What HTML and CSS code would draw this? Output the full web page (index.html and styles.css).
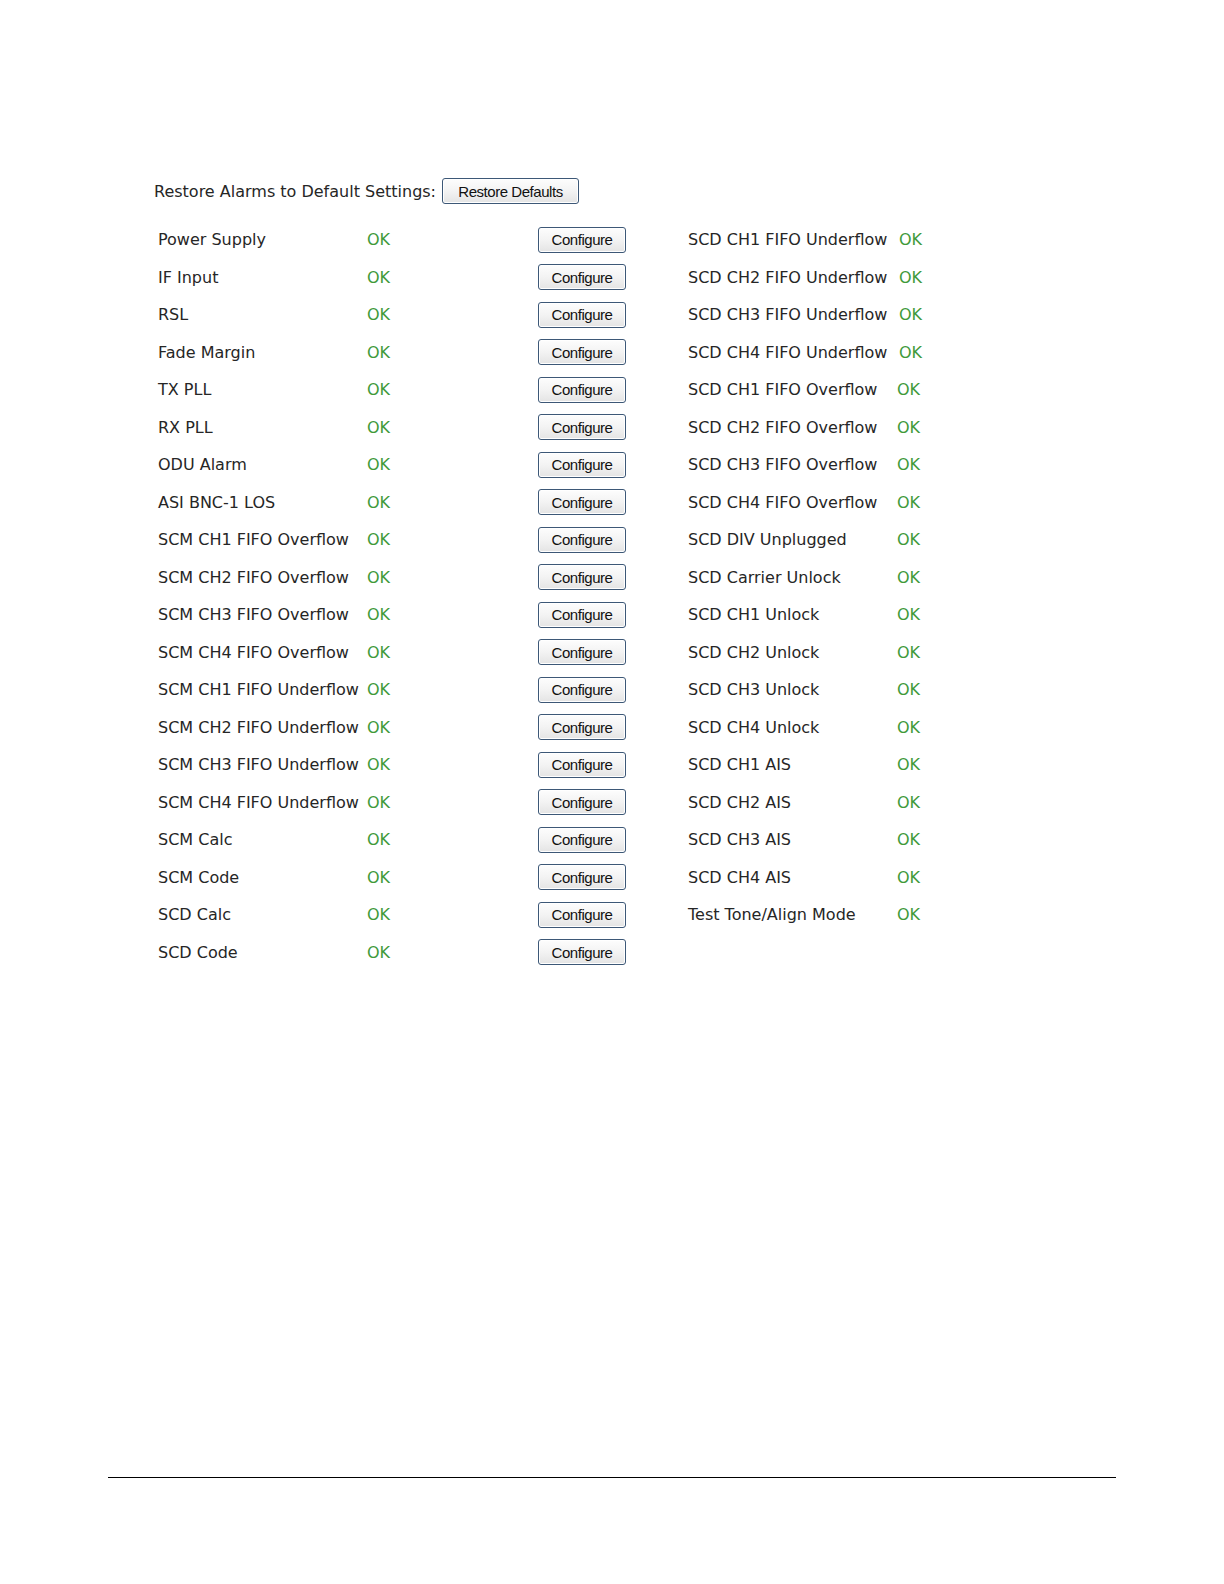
FILE: index.html
```html
<!DOCTYPE html>
<html>
<head>
<meta charset="utf-8">
<title>Alarms</title>
<link rel="stylesheet" href="styles.css">
</head>
<body>
<div class="page">
  <div class="restore-row">
    <span class="restore-label">Restore Alarms to Default Settings:</span>
    <button class="btn btn-restore">Restore Defaults</button>
  </div>
  <div class="alarms">
    <span class="lbl">Power Supply</span><span class="ok">OK</span><span class="cell-btn"><button class="btn">Configure</button></span><span class="lbl">SCD CH1 FIFO Underflow</span><span class="ok ok-wide">OK</span>
    <span class="lbl">IF Input</span><span class="ok">OK</span><span class="cell-btn"><button class="btn">Configure</button></span><span class="lbl">SCD CH2 FIFO Underflow</span><span class="ok ok-wide">OK</span>
    <span class="lbl">RSL</span><span class="ok">OK</span><span class="cell-btn"><button class="btn">Configure</button></span><span class="lbl">SCD CH3 FIFO Underflow</span><span class="ok ok-wide">OK</span>
    <span class="lbl">Fade Margin</span><span class="ok">OK</span><span class="cell-btn"><button class="btn">Configure</button></span><span class="lbl">SCD CH4 FIFO Underflow</span><span class="ok ok-wide">OK</span>
    <span class="lbl">TX PLL</span><span class="ok">OK</span><span class="cell-btn"><button class="btn">Configure</button></span><span class="lbl">SCD CH1 FIFO Overflow</span><span class="ok">OK</span>
    <span class="lbl">RX PLL</span><span class="ok">OK</span><span class="cell-btn"><button class="btn">Configure</button></span><span class="lbl">SCD CH2 FIFO Overflow</span><span class="ok">OK</span>
    <span class="lbl">ODU Alarm</span><span class="ok">OK</span><span class="cell-btn"><button class="btn">Configure</button></span><span class="lbl">SCD CH3 FIFO Overflow</span><span class="ok">OK</span>
    <span class="lbl">ASI BNC-1 LOS</span><span class="ok">OK</span><span class="cell-btn"><button class="btn">Configure</button></span><span class="lbl">SCD CH4 FIFO Overflow</span><span class="ok">OK</span>
    <span class="lbl">SCM CH1 FIFO Overflow</span><span class="ok">OK</span><span class="cell-btn"><button class="btn">Configure</button></span><span class="lbl">SCD DIV Unplugged</span><span class="ok">OK</span>
    <span class="lbl">SCM CH2 FIFO Overflow</span><span class="ok">OK</span><span class="cell-btn"><button class="btn">Configure</button></span><span class="lbl">SCD Carrier Unlock</span><span class="ok">OK</span>
    <span class="lbl">SCM CH3 FIFO Overflow</span><span class="ok">OK</span><span class="cell-btn"><button class="btn">Configure</button></span><span class="lbl">SCD CH1 Unlock</span><span class="ok">OK</span>
    <span class="lbl">SCM CH4 FIFO Overflow</span><span class="ok">OK</span><span class="cell-btn"><button class="btn">Configure</button></span><span class="lbl">SCD CH2 Unlock</span><span class="ok">OK</span>
    <span class="lbl">SCM CH1 FIFO Underflow</span><span class="ok">OK</span><span class="cell-btn"><button class="btn">Configure</button></span><span class="lbl">SCD CH3 Unlock</span><span class="ok">OK</span>
    <span class="lbl">SCM CH2 FIFO Underflow</span><span class="ok">OK</span><span class="cell-btn"><button class="btn">Configure</button></span><span class="lbl">SCD CH4 Unlock</span><span class="ok">OK</span>
    <span class="lbl">SCM CH3 FIFO Underflow</span><span class="ok">OK</span><span class="cell-btn"><button class="btn">Configure</button></span><span class="lbl">SCD CH1 AIS</span><span class="ok">OK</span>
    <span class="lbl">SCM CH4 FIFO Underflow</span><span class="ok">OK</span><span class="cell-btn"><button class="btn">Configure</button></span><span class="lbl">SCD CH2 AIS</span><span class="ok">OK</span>
    <span class="lbl">SCM Calc</span><span class="ok">OK</span><span class="cell-btn"><button class="btn">Configure</button></span><span class="lbl">SCD CH3 AIS</span><span class="ok">OK</span>
    <span class="lbl">SCM Code</span><span class="ok">OK</span><span class="cell-btn"><button class="btn">Configure</button></span><span class="lbl">SCD CH4 AIS</span><span class="ok">OK</span>
    <span class="lbl">SCD Calc</span><span class="ok">OK</span><span class="cell-btn"><button class="btn">Configure</button></span><span class="lbl">Test Tone/Align Mode</span><span class="ok">OK</span>
    <span class="lbl">SCD Code</span><span class="ok">OK</span><span class="cell-btn"><button class="btn">Configure</button></span><span class="lbl"></span><span class="ok"></span>
  </div>
  <div class="footer-rule"></div>
</div>
</body>
</html>
```

FILE: styles.css
```css
html, body {
  margin: 0;
  padding: 0;
  background: #ffffff;
}

.page {
  padding-top: 176px;
  font-family: "DejaVu Sans", Verdana, sans-serif;
  font-size: 16px;
  color: #262626;
}

.restore-row {
  display: flex;
  align-items: center;
  height: 30px;
  padding-left: 154px;
  gap: 6px;
}

.alarms {
  display: grid;
  grid-template-columns: 209px 171px 150px 209px 60px;
  grid-auto-rows: 37.5px;
  margin-top: 15px;
  padding-left: 158px;
  align-items: center;
}

.lbl {
  white-space: nowrap;
}

.ok {
  color: #3f9a3a;
}

.ok-wide {
  padding-left: 2px;
}

.cell-btn {
  display: flex;
  align-items: center;
}

.btn {
  font-family: "Liberation Sans", Arial, sans-serif;
  font-size: 15px;
  letter-spacing: -0.45px;
  color: #111;
  height: 26px;
  width: 88px;
  padding: 0;
  border: 1px solid #3d5877;
  border-radius: 3px;
  background: linear-gradient(#fdfdfd 0%, #f3f3f3 50%, #e4e4e4 100%);
  box-shadow: inset 0 0 0 1px #ffffff;
}

.btn-restore {
  width: 137px;
}

.footer-rule {
  margin: 506px 108px 0 108px;
  height: 0;
  border-top: 1px solid #000;
}
```
